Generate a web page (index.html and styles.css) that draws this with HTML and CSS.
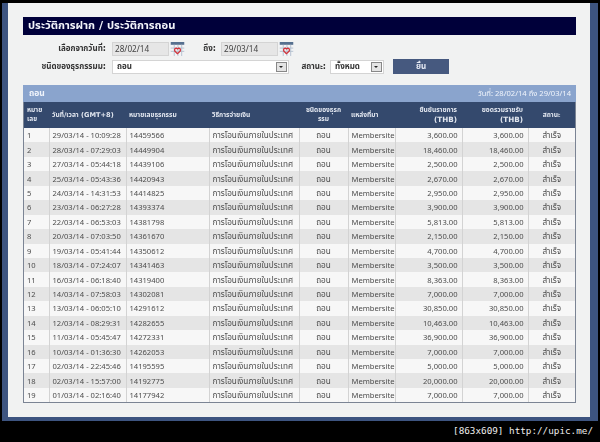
FILE: index.html
```html
<!DOCTYPE html>
<html lang="th">
<head>
<meta charset="utf-8">
<title>ประวัติการฝาก / ประวัติการถอน</title>
<link rel="stylesheet" href="styles.css">
</head>
<body>
<div class="window">
  <div class="content">
    <h1 class="title">ประวัติการฝาก / ประวัติการถอน</h1>
    <form class="filters">
      <div class="filter-row">
        <label class="lbl lbl-main">เลือกจากวันที่:</label>
        <span class="date">28/02/14</span>
        <svg class="cal" viewBox="0 0 15 15"><use href="#cal"/></svg>
        <label class="lbl lbl-to">ถึง:</label>
        <span class="date">29/03/14</span>
        <svg class="cal" viewBox="0 0 15 15"><use href="#cal"/></svg>
      </div>
      <div class="filter-row row-two">
        <label class="lbl lbl-main">ชนิดของธุรกรรมม:</label>
        <span class="select select-type">ถอน<i class="arrow"></i></span>
        <label class="lbl lbl-status">สถานะ:</label>
        <span class="select select-status">ทั้งหมด<i class="arrow"></i></span>
        <span class="submit">ยื่น</span>
      </div>
    </form>
    <section class="panel">
      <div class="panel-head"><span class="panel-title">ถอน</span><span class="panel-range">วันที่: 28/02/14 ถึง 29/03/14</span></div>
      <table class="grid">
        <colgroup>
          <col class="c1"><col class="c2"><col class="c3"><col class="c4"><col class="c5"><col class="c6"><col class="c7"><col class="c8"><col class="c9">
        </colgroup>
        <thead>
          <tr>
            <th>หมาย<br>เลข</th><th>วันที่/เวลา (GMT+8)</th><th>หมายเลขธุรกรรม</th><th>วิธีการจ่ายเงิน</th><th class="ctr">ชนิดของธุรก<br>รรม</th><th>แหล่งที่มา</th><th class="num">ยืนยันรายการ<br><b>(THB)</b></th><th class="num">ยอดรวมรายรับ<br><b>(THB)</b></th><th class="ctr">สถานะ</th>
          </tr>
        </thead>
        <tbody id="rows"></tbody>
      </table>
    </section>
  </div>
</div>
<div class="stamp">[863x609] http://upic.me/</div>
<svg class="defs" width="0" height="0">
  <symbol id="cal" viewBox="0 0 15 15">
    <rect x="0" y="0" width="15" height="15" fill="#f2f3f5"/>
    <rect x="0" y="0" width="15" height="3" fill="#56708f"/>
    <path d="M0 6.5H15M0 10H15M4 3V15M8 3V15M12 3V15" stroke="#b4c0cf" stroke-width="1" fill="none"/>
    <path d="M7.5 12.5L4.5 9.5V7.5L6 6.5L7.5 7.5L9 6.5L10.5 7.5V9.5Z" fill="none" stroke="#d0343c" stroke-width="1.4"/>
  </symbol>
</svg>
<script src="rows.js"></script>
</body>
</html>
```
FILE: rows.js
```js
var data = [
["29/03/14 - 10:09:28","14459566","3,600.00"],
["28/03/14 - 07:29:03","14449904","18,460.00"],
["27/03/14 - 05:44:18","14439106","2,500.00"],
["25/03/14 - 05:43:36","14420943","2,670.00"],
["24/03/14 - 14:31:53","14414825","2,950.00"],
["23/03/14 - 06:27:28","14393374","3,900.00"],
["22/03/14 - 06:53:03","14381798","5,813.00"],
["20/03/14 - 07:03:50","14361670","2,150.00"],
["19/03/14 - 05:41:44","14350612","4,700.00"],
["18/03/14 - 07:24:07","14341463","3,500.00"],
["16/03/14 - 06:18:40","14319400","8,363.00"],
["14/03/14 - 07:58:03","14302081","7,000.00"],
["13/03/14 - 06:05:10","14291612","30,850.00"],
["12/03/14 - 08:29:31","14282655","10,463.00"],
["11/03/14 - 05:45:47","14272331","36,900.00"],
["10/03/14 - 01:36:30","14262053","7,000.00"],
["02/03/14 - 22:45:46","14195595","5,000.00"],
["02/03/14 - 15:57:00","14192775","20,000.00"],
["01/03/14 - 02:16:40","14177942","7,000.00"]
];
var html = "";
data.forEach(function (r, i) {
  html += "<tr><td>" + (i + 1) + "</td><td>" + r[0] + "</td><td>" + r[1] +
    "</td><td class=\"thai\">การโอนเงินภายในประเทศ</td><td class=\"ctr thai\">ถอน</td><td>Membersite</td><td class=\"num\">" +
    r[2] + "</td><td class=\"num\">" + r[2] + "</td><td class=\"ctr thai\">สำเร็จ</td></tr>";
});
document.getElementById("rows").innerHTML = html;
```
FILE: styles.css
```css
* { box-sizing: border-box; }
html, body { margin: 0; padding: 0; }
body {
  width: 600px;
  height: 442px;
  background: #000;
  font-family: Tahoma, "DejaVu Sans", "Noto Sans Thai", "Noto Sans", sans-serif;
  font-size: 8px;
  color: #4a4a4a;
  overflow: hidden;
  padding: 3px 2px 0 2px;
}
.window {
  width: 596px;
  height: 418px;
  background: #3d5480;
  padding: 0 8px 4px 6px;
  filter: blur(0.3px);
}
.content {
  height: 414px;
  background: #f1f2f2;
  padding: 14px 14px 0 15px;
}
.title {
  margin: 0;
  height: 18px;
  background: #00003a;
  color: #f2f4fa;
  font-size: 11.2px;
  line-height: 18px;
  font-weight: bold;
  padding-left: 5px;
}
.filters { height: 50px; padding-top: 6px; }
.filter-row { display: flex; align-items: center; height: 14px; margin-top: 1px; }
.row-two { margin-top: 3px; height: 15px; }
.lbl { text-align: right; font-weight: bold; font-size: 8px; color: #333; white-space: nowrap; }
.lbl-main { width: 83px; margin-right: 6px; }
.lbl-to { width: 21px; margin: 0 5px 0 10px; }
.lbl-status { width: 33px; margin: 0 4px 0 4px; }
.date {
  width: 57px;
  height: 14px;
  background: #e6e6e6;
  border: 1px solid #d4d4d4;
  padding-left: 2px;
  line-height: 12px;
  font-family: "Noto Sans", sans-serif;
  font-size: 8.2px;
  color: #444;
}
.cal { width: 15px; height: 14px; margin-left: 1px; }
.select {
  position: relative;
  height: 14px;
  background: #fff;
  border: 1px solid #d4d4d4;
  padding-left: 4px;
  line-height: 12px;
  font-weight: bold;
  color: #333;
}
.select-type { width: 177px; }
.select-status { width: 54px; }
.arrow {
  position: absolute;
  right: 1px;
  top: 1px;
  width: 11px;
  height: 10px;
  background: #e4e4e4;
  border: 1px solid #888;
}
.arrow::after {
  content: "";
  position: absolute;
  left: 2px;
  top: 3px;
  border: 2px solid transparent;
  border-top: 2px solid #222;
}
.submit {
  width: 56px;
  height: 15px;
  margin-left: 9px;
  background: #46597f;
  color: #e8ecf5;
  font-weight: bold;
  text-align: center;
  line-height: 15px;
}
.panel { width: 553px; border: 1px solid #7b8494; border-top: 0; }
.panel-head {
  display: flex;
  justify-content: space-between;
  align-items: center;
  height: 17px;
  margin: 0 -1px;
  background: #8aa4cd;
  color: #f0f4fb;
  padding: 0 5px 0 6px;
}
.panel-title { font-weight: bold; font-size: 8.5px; }
.panel-range { font-family: "Noto Sans", "Noto Sans Thai", sans-serif; font-size: 7.6px; }
.grid { width: 551px; border-collapse: collapse; table-layout: fixed; background: #fff; }
.c1 { width: 25px; } .c2 { width: 77px; } .c3 { width: 83px; } .c4 { width: 90px; }
.c5 { width: 49px; } .c6 { width: 47px; } .c7 { width: 67px; } .c8 { width: 66px; } .c9 { width: 47px; }
th {
  height: 26px;
  background: #34496d;
  color: #e2e7f0;
  font-size: 6.6px;
  line-height: 9px;
  font-weight: bold;
  text-align: left;
  padding: 0 3px;
  overflow: hidden;
}
th b { font-size: 7.2px; }
td {
  height: 14.44px;
  padding: 0 3px 0 3px;
  font-family: "Noto Sans", "Noto Sans Thai", sans-serif;
  font-size: 7.6px;
  line-height: 10px;
  white-space: nowrap;
  overflow: hidden;
  border-right: 1px solid #d3d3d3;
  color: #4d4d4d;
}
td:last-child { border-right: 0; }
td.thai { font-family: Tahoma, "DejaVu Sans", "Noto Sans Thai", "Noto Sans", sans-serif; font-size: 8.2px; }
tbody tr:nth-child(odd) td { background: #f7f7f7; }
tbody tr:nth-child(even) td { background: #e5e5e5; }
.num { text-align: right; padding-right: 4px; }
th.num { padding-right: 5px; }
.ctr { text-align: center; }
.stamp {
  color: #eee;
  font-family: "DejaVu Sans Mono", "Liberation Mono", monospace;
  font-size: 9.3px;
  line-height: 14px;
  text-align: right;
  padding: 3px 5px 0 0;
}
.defs { position: absolute; }
```
